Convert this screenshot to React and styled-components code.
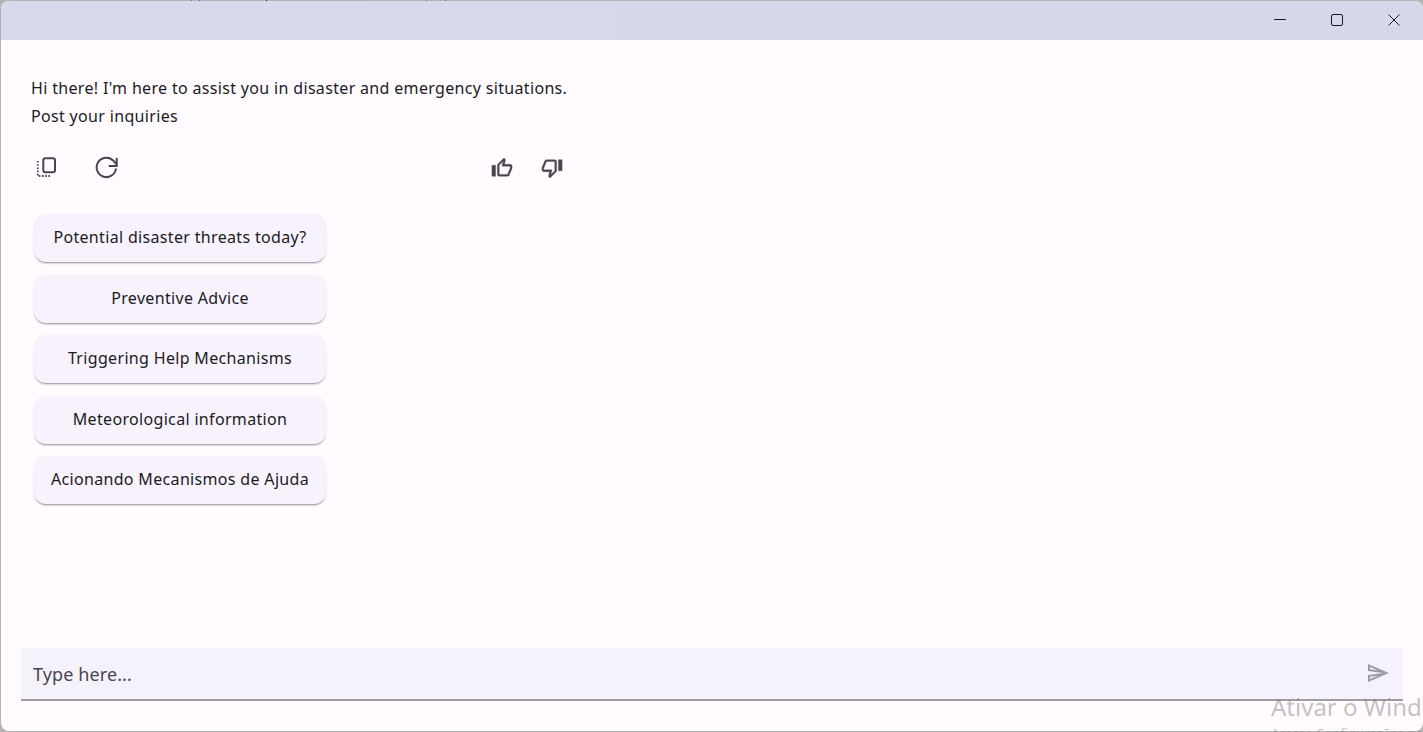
import React from "react";
import styled, { createGlobalStyle } from "styled-components";

const Global = createGlobalStyle`
  html, body { margin: 0; padding: 0; height: 100%; background: #a9a9a9; overflow: hidden; }
  #root { height: 100%; }
  * { box-sizing: border-box; }
`;

const Screen = styled.div`
  position: relative;
  width: 1423px;
  height: 732px;
  overflow: hidden;
  background:
    linear-gradient(
      90deg,
      transparent 191px, #8a6a3a 191px, #8a6a3a 192px, transparent 192px,
      transparent 199px, #4a6a9a 199px, #4a6a9a 200px, transparent 200px,
      transparent 266px, #222 266px, #222 267px, transparent 267px,
      transparent 426px, #777 426px, #777 427px, transparent 427px,
      transparent 445px, #666 445px, #666 446px, transparent 446px
    ) top left / 100% 1px no-repeat,
    #b4b4b4;
`;

const Win = styled.div`
  width: 1423px;
  height: 732px;
  padding: 1px 0 1px 1px;
  display: flex;
  flex-direction: column;
  font-family: "Noto Sans", "Open Sans", sans-serif;
  color: #1c1b1f;
`;

const Inner = styled.div`
  flex: 1;
  display: flex;
  flex-direction: column;
  min-height: 0;
  background: #fffbff;
  border-radius: 8px;
  overflow: hidden;
`;

const TitleBar = styled.header`
  height: 39px;
  flex: none;
  padding-right: 0.5px;
  background: linear-gradient(90deg, #d9d9ec, #d5d9eb);
  display: flex;
  justify-content: flex-end;
`;

const WinButton = styled.button`
  width: 57px;
  height: 39px;
  padding: 0 0 2px;
  border: 0;
  background: transparent;
  display: flex;
  align-items: center;
  justify-content: center;
  color: #1a1a1a;
`;

const Body = styled.main`
  flex: 1;
  min-height: 0;
  display: flex;
  flex-direction: column;
  padding: 34px 20px 0;
`;

const Messages = styled.section`
  flex: 1;
  min-height: 0;
  padding-left: 10px;
`;

const Greeting = styled.p`
  margin: 0;
  font-size: 16px;
  letter-spacing: 0.33px;
  line-height: 28px;
`;

const Actions = styled.div`
  width: 532px;
  margin-top: 22px;
  height: 30px;
  display: flex;
  align-items: center;
  justify-content: space-between;
  color: #49454f;
`;

const ActionGroup = styled.div`
  display: flex;
  gap: ${(p) => p.$gap}px;
  padding: ${(p) => p.$pad};
`;

const Suggestions = styled.div`
  margin: 32px 0 0 3px;
  width: 292px;
  display: flex;
  flex-direction: column;
  gap: 12.5px;
`;

const Suggestion = styled.button`
  height: 48px;
  width: 100%;
  padding: 0 0 2px;
  border: 0;
  border-radius: 12px;
  background: #f7f2fb;
  box-shadow: 0 2px 2px -1px rgba(0, 0, 0, 0.4), 0 1px 3px rgba(0, 0, 0, 0.06);
  color: #1c1b1f;
  font: inherit;
  font-size: 16px;
  letter-spacing: 0.33px;
  white-space: nowrap;
`;

const InputBar = styled.div`
  flex: none;
  height: 53px;
  margin-bottom: 30px;
  display: flex;
  align-items: center;
  background: #f6f2fb;
  border-bottom: 2px solid #a09ca6;
  padding: 0 13px 0 12px;
`;

const Input = styled.input`
  flex: 1;
  border: 0;
  outline: 0;
  background: transparent;
  font: inherit;
  font-size: 18px;
  letter-spacing: 0.1px;
  color: #49454f;
  padding: 0;
  &::placeholder { color: #49454f; opacity: 1; }
`;

const Send = styled.button`
  width: 24px;
  height: 24px;
  margin-bottom: 2px;
  padding: 0;
  border: 0;
  background: transparent;
  color: #a09ca6;
`;

const Watermark = styled.div`
  position: absolute;
  left: 1271px;
  top: 691px;
  width: 400px;
  font-family: "Noto Sans", "Open Sans", sans-serif;
  font-size: 24px;
  line-height: 32px;
  color: rgba(120, 120, 120, 0.45);
  white-space: nowrap;
  pointer-events: none;
`;

const WatermarkSub = styled.div`
  font-size: 13px;
  line-height: 20px;
`;

const Svg = styled.svg`
  display: block;
`;

const CopyIcon = () => (
  <Svg width="24" height="24" viewBox="0 0 24 24" fill="none" stroke="currentColor">
    <rect x="9.3" y="3.3" width="11.7" height="14" rx="2" strokeWidth="2" />
    <path d="M3.8 6V21H17" strokeWidth="1.8" strokeDasharray="1.6 1.6" />
  </Svg>
);

const RefreshIcon = () => (
  <Svg width="24" height="24" viewBox="0 0 24 24" fill="none" stroke="currentColor" strokeWidth="2">
    <path d="M21 13.5A9.7 9.7 0 1 1 18.4 5.7L21.2 9" />
    <path d="M21.7 3v8h-8" />
  </Svg>
);

const ThumbUp = () => (
  <Svg width="22" height="22" viewBox="0 0 24 24" fill="currentColor" stroke="currentColor" strokeWidth="0.4">
    <path d="M9 21h9c.83 0 1.54-.5 1.84-1.22l3.02-7.05c.09-.23.14-.47.14-.73v-2c0-1.1-.9-2-2-2h-6.31l.95-4.57.03-.32c0-.41-.17-.79-.44-1.06L14.17 1 7.58 7.59C7.22 7.95 7 8.45 7 9v10c0 1.1.9 2 2 2zM9 9l4.34-4.34L12 10h9v2l-3 7H9V9zM1 9h4v12H1z" />
  </Svg>
);

const ThumbDown = () => (
  <Svg width="22" height="22" viewBox="0 0 24 24" fill="currentColor" stroke="currentColor" strokeWidth="0.4">
    <path d="M15 3H6c-.83 0-1.54.5-1.84 1.22l-3.02 7.05c-.09.23-.14.47-.14.73v2c0 1.1.9 2 2 2h6.31l-.95 4.57-.03.32c0 .41.17.79.44 1.06L9.83 23l6.59-6.59c.36-.36.58-.86.58-1.41V5c0-1.1-.9-2-2-2zm0 12l-4.34 4.34L12 14H3v-2l3-7h9v10zm4-12h4v12h-4z" />
  </Svg>
);

const SendIcon = () => (
  <Svg width="24" height="24" viewBox="0 0 24 24" fill="currentColor">
    <path d="M4.01 6.03l7.51 3.22-7.52-1 .01-2.22m7.5 8.72L4 17.97v-2.22l7.51-1M2.01 3L2 10l15 2-15 2 .01 7L23 12 2.01 3z" />
  </Svg>
);

const suggestions = [
  "Potential disaster threats today?",
  "Preventive Advice",
  "Triggering Help Mechanisms",
  "Meteorological information",
  "Acionando Mecanismos de Ajuda",
];

export default function App() {
  return (
    <Screen>
      <Global />
      <Win>
        <Inner>
          <TitleBar>
            <WinButton aria-label="Minimize">
              <Svg width="12" height="12" viewBox="0 0 12 12" stroke="currentColor" fill="none"><path d="M0 5.5h12" /></Svg>
            </WinButton>
            <WinButton aria-label="Maximize">
              <Svg width="12" height="12" viewBox="0 0 12 12" stroke="currentColor" fill="none"><rect x=".5" y=".5" width="11" height="11" rx="1.5" /></Svg>
            </WinButton>
            <WinButton aria-label="Close">
              <Svg width="12" height="12" viewBox="0 0 12 12" stroke="currentColor" fill="none"><path d="M.5.5l11 11M11.5.5l-11 11" /></Svg>
            </WinButton>
          </TitleBar>
          <Body>
            <Messages>
              <Greeting>
                Hi there! I'm here to assist you in disaster and emergency situations.
                <br />
                Post your inquiries
              </Greeting>
              <Actions>
                <ActionGroup $gap={37} $pad="0 0 0 3px"><CopyIcon /><RefreshIcon /></ActionGroup>
                <ActionGroup $gap={28} $pad="2px 0 0"><ThumbUp /><ThumbDown /></ActionGroup>
              </Actions>
              <Suggestions>
                {suggestions.map((s) => <Suggestion key={s}>{s}</Suggestion>)}
              </Suggestions>
            </Messages>
            <InputBar>
              <Input placeholder="Type here..." />
              <Send aria-label="Send"><SendIcon /></Send>
            </InputBar>
          </Body>
        </Inner>
      </Win>
      <Watermark>
        Ativar o Windows
        <WatermarkSub>Acesse Configurações para ativar o Windows.</WatermarkSub>
      </Watermark>
    </Screen>
  );
}
